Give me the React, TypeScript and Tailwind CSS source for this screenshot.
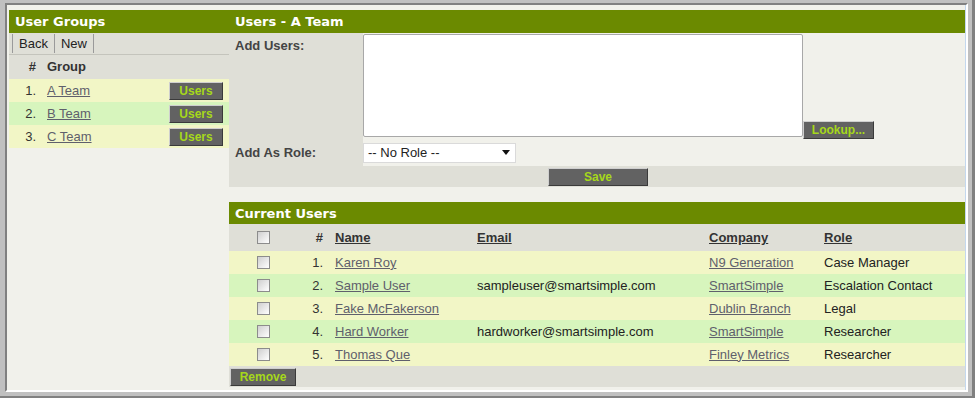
import React from 'react'

const groups = [
  { n: 1, name: 'A Team' },
  { n: 2, name: 'B Team' },
  { n: 3, name: 'C Team' },
]

const users = [
  { n: 1, name: 'Karen Roy', email: '', company: 'N9 Generation', role: 'Case Manager' },
  { n: 2, name: 'Sample User', email: 'sampleuser@smartsimple.com', company: 'SmartSimple', role: 'Escalation Contact' },
  { n: 3, name: 'Fake McFakerson', email: '', company: 'Dublin Branch', role: 'Legal' },
  { n: 4, name: 'Hard Worker', email: 'hardworker@smartsimple.com', company: 'SmartSimple', role: 'Researcher' },
  { n: 5, name: 'Thomas Que', email: '', company: 'Finley Metrics', role: 'Researcher' },
]

const rowBg = (i: number) => (i % 2 === 0 ? 'bg-[#f2f6c6]' : 'bg-[#d7f5bd]')

function Header({ title, h = 'h-[23px]' }: { title: string; h?: string }) {
  return (
    <div
      className={`${h} bg-[#6b8a00] text-white font-bold text-[13px] leading-none flex items-center px-[6px]`}
      style={{ fontFamily: '"DejaVu Sans", Verdana, sans-serif' }}
    >
      {title}
    </div>
  )
}

function DarkButton({ label, className = '' }: { label: string; className?: string }) {
  return (
    <div
      className={`h-[18px] bg-[#626262] text-[#a6d81a] font-bold text-[12px] flex items-center justify-center border-t border-l border-t-[#cfcfcf] border-l-[#cfcfcf] border-b border-r border-b-[#3a3a3a] border-r-[#3a3a3a] ${className}`}
    >
      {label}
    </div>
  )
}

function Checkbox() {
  return (
    <div className="w-[13px] h-[13px] border border-[#8c8c8c] bg-gradient-to-br from-[#cfcfcf] to-white" />
  )
}

export default function App() {
  return (
    <div
      className="w-[975px] h-[398px] bg-[#808080] pr-[3px] pb-[2px] text-[13px] text-[#222]"
      style={{ fontFamily: '"Liberation Sans", Arial, sans-serif' }}
    >
      <div className="w-full h-full bg-[#c0c0c0] pl-[5px] pt-[3px] pr-[4px] pb-[4px]">
        <div className="w-full h-full border-l-2 border-t-2 border-l-[#808080] border-t-[#808080] border-r-2 border-b-2 border-r-white border-b-white">
          <div className="w-full h-full bg-[#f1f1eb] border-r border-r-[#c4d8ee] pl-[2px] pt-[5px] pb-[3px] flex">
            {/* Left: user groups */}
            <div className="w-[220px] flex flex-col">
              <Header title="User Groups" />
              <div className="h-[22px] bg-[#dfdfd7] border-b border-b-[#c4c4bc] flex items-center pl-[3px]">
                <div className="h-[19px] border-l border-l-[#9a9a9a] border-r border-r-[#9a9a9a] px-[6px] flex items-center">Back</div>
                <div className="h-[19px] border-r border-r-[#9a9a9a] px-[6px] flex items-center">New</div>
              </div>
              <div className="h-[24px] bg-[#dfdfd7] flex items-center font-bold text-[#333]">
                <div className="w-[27px] text-right">#</div>
                <div className="pl-[11px]">Group</div>
              </div>
              {groups.map((g, i) => (
                <div key={g.n} className={`h-[23px] ${rowBg(i)} flex items-center`}>
                  <div className="w-[27px] text-right text-[#333]">{g.n}.</div>
                  <a className="pl-[11px] underline text-[#5f5f6c] flex-1">{g.name}</a>
                  <DarkButton label="Users" className="w-[54px] mr-[6px]" />
                </div>
              ))}
            </div>

            {/* Right: users */}
            <div className="flex-1 flex flex-col">
              <Header title="Users - A Team" />
              <div className="flex">
                <div className="w-[134px] h-[106px] bg-[#dfdfd7] px-[6px] pt-[3px] font-bold text-[#444]">Add Users:</div>
                <div className="flex-1 flex items-start pt-[1px]">
                  <div className="w-[440px] h-[103px] bg-white border border-[#a8a8a8] rounded-[2px]" />
                  <DarkButton label="Lookup..." className="w-[71px] mt-[87px]" />
                </div>
              </div>
              <div className="flex h-[27px]">
                <div className="w-[134px] bg-[#dfdfd7] px-[6px] flex items-center font-bold text-[#444]">Add As Role:</div>
                <div className="flex-1 flex items-center">
                  <div className="w-[153px] h-[20px] bg-white border border-[#dadada] flex items-center justify-between pl-[4px] pr-[5px] text-[#222]">
                    <span>-- No Role --</span>
                    <svg width="8" height="5" viewBox="0 0 8 5"><path d="M0 0h8L4 5z" fill="#111" /></svg>
                  </div>
                </div>
              </div>
              <div className="h-[21px] bg-[#dfdfd7] flex items-center pl-[319px]">
                <DarkButton label="Save" className="w-[100px]" />
              </div>

              <div className="h-[15px]" />
              <Header title="Current Users" h="h-[22px]" />
              <div className="grid grid-cols-[68px_32px_142px_232px_115px_1fr]">
                <div className="h-[27px] bg-[#dfdfd7] flex items-center justify-center"><Checkbox /></div>
                <div className="h-[27px] bg-[#dfdfd7] flex items-center justify-end pr-[6px] font-bold text-[#333]">#</div>
                <div className="h-[27px] bg-[#dfdfd7] flex items-center pl-[6px] font-bold underline text-[#333]">Name</div>
                <div className="h-[27px] bg-[#dfdfd7] flex items-center pl-[6px] font-bold underline text-[#333]">Email</div>
                <div className="h-[27px] bg-[#dfdfd7] flex items-center pl-[6px] font-bold underline text-[#333]">Company</div>
                <div className="h-[27px] bg-[#dfdfd7] flex items-center pl-[6px] font-bold underline text-[#333]">Role</div>
                {users.map((u, i) => (
                  <React.Fragment key={u.n}>
                    <div className={`h-[23px] ${rowBg(i)} flex items-center justify-center`}><Checkbox /></div>
                    <div className={`h-[23px] ${rowBg(i)} flex items-center justify-end pr-[6px] text-[#333]`}>{u.n}.</div>
                    <div className={`h-[23px] ${rowBg(i)} flex items-center pl-[6px]`}><a className="underline text-[#5f5f6c]">{u.name}</a></div>
                    <div className={`h-[23px] ${rowBg(i)} flex items-center pl-[6px]`}>{u.email}</div>
                    <div className={`h-[23px] ${rowBg(i)} flex items-center pl-[6px]`}><a className="underline text-[#5f5f6c]">{u.company}</a></div>
                    <div className={`h-[23px] ${rowBg(i)} flex items-center pl-[6px]`}>{u.role}</div>
                  </React.Fragment>
                ))}
              </div>
              <div className="h-[21px] bg-[#dfdfd7] flex items-center pl-[1px]">
                <DarkButton label="Remove" className="w-[66px]" />
              </div>
            </div>
          </div>
        </div>
      </div>
    </div>
  )
}
